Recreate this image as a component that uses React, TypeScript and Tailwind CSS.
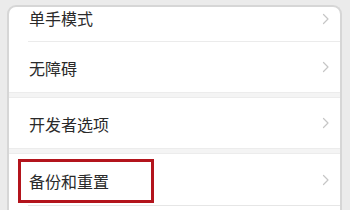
import React from "react";

const Chevron = () => (
  <svg width="8" height="12" viewBox="0 0 8 12" fill="none" className="shrink-0">
    <path d="M1.5 1.5 L6 6 L1.5 10.5" stroke="#c6c6c6" strokeWidth="1.2" strokeLinecap="round" strokeLinejoin="round" />
  </svg>
);

const Row = ({ label, h, children }: { label: string; h: string; children?: React.ReactNode }) => (
  <div className={`relative flex items-center justify-between pl-[20px] pr-[10px] ${h}`}>
    <span className="text-[16px] text-[#2a2a2a] leading-none pt-[2px]">{label}</span>
    <Chevron />
    {children}
  </div>
);

export default function App() {
  return (
    <div
      className="w-[350px] h-[210px] overflow-hidden bg-[#ebebeb] pl-[7px] pr-[8px] pt-[5px]"
      style={{ fontFamily: '"Noto Sans CJK SC", "Noto Sans", sans-serif' }}
    >
      <div className="h-[230px] bg-white border-x-2 border-t-2 border-[#d6d6d6] rounded-t-[9px] flex flex-col">
        <div className="relative flex items-start justify-between pl-[20px] pr-[10px] h-[34px]">
          <span className="text-[16px] text-[#2a2a2a] leading-[24px] -mt-[1px]">单手模式</span>
          <div className="h-[24px] flex items-center">
            <Chevron />
          </div>
        </div>
        <div className="ml-[19px] h-px bg-[#ebebeb]" />
        <Row label="无障碍" h="h-[50px]" />
        <div className="h-[6px] bg-[#f4f4f4] border-y border-[#ececec]" />
        <Row label="开发者选项" h="h-[50px]" />
        <div className="h-[6px] bg-[#f4f4f4] border-y border-[#ececec]" />
        <Row label="备份和重置" h="h-[51px]">
          <div className="absolute left-[9px] top-[5px] w-[136px] h-[44px] border-[3px] border-[#b3141c]" />
        </Row>
        <div className="ml-[19px] h-px bg-[#e6e6e6]" />
      </div>
    </div>
  );
}
